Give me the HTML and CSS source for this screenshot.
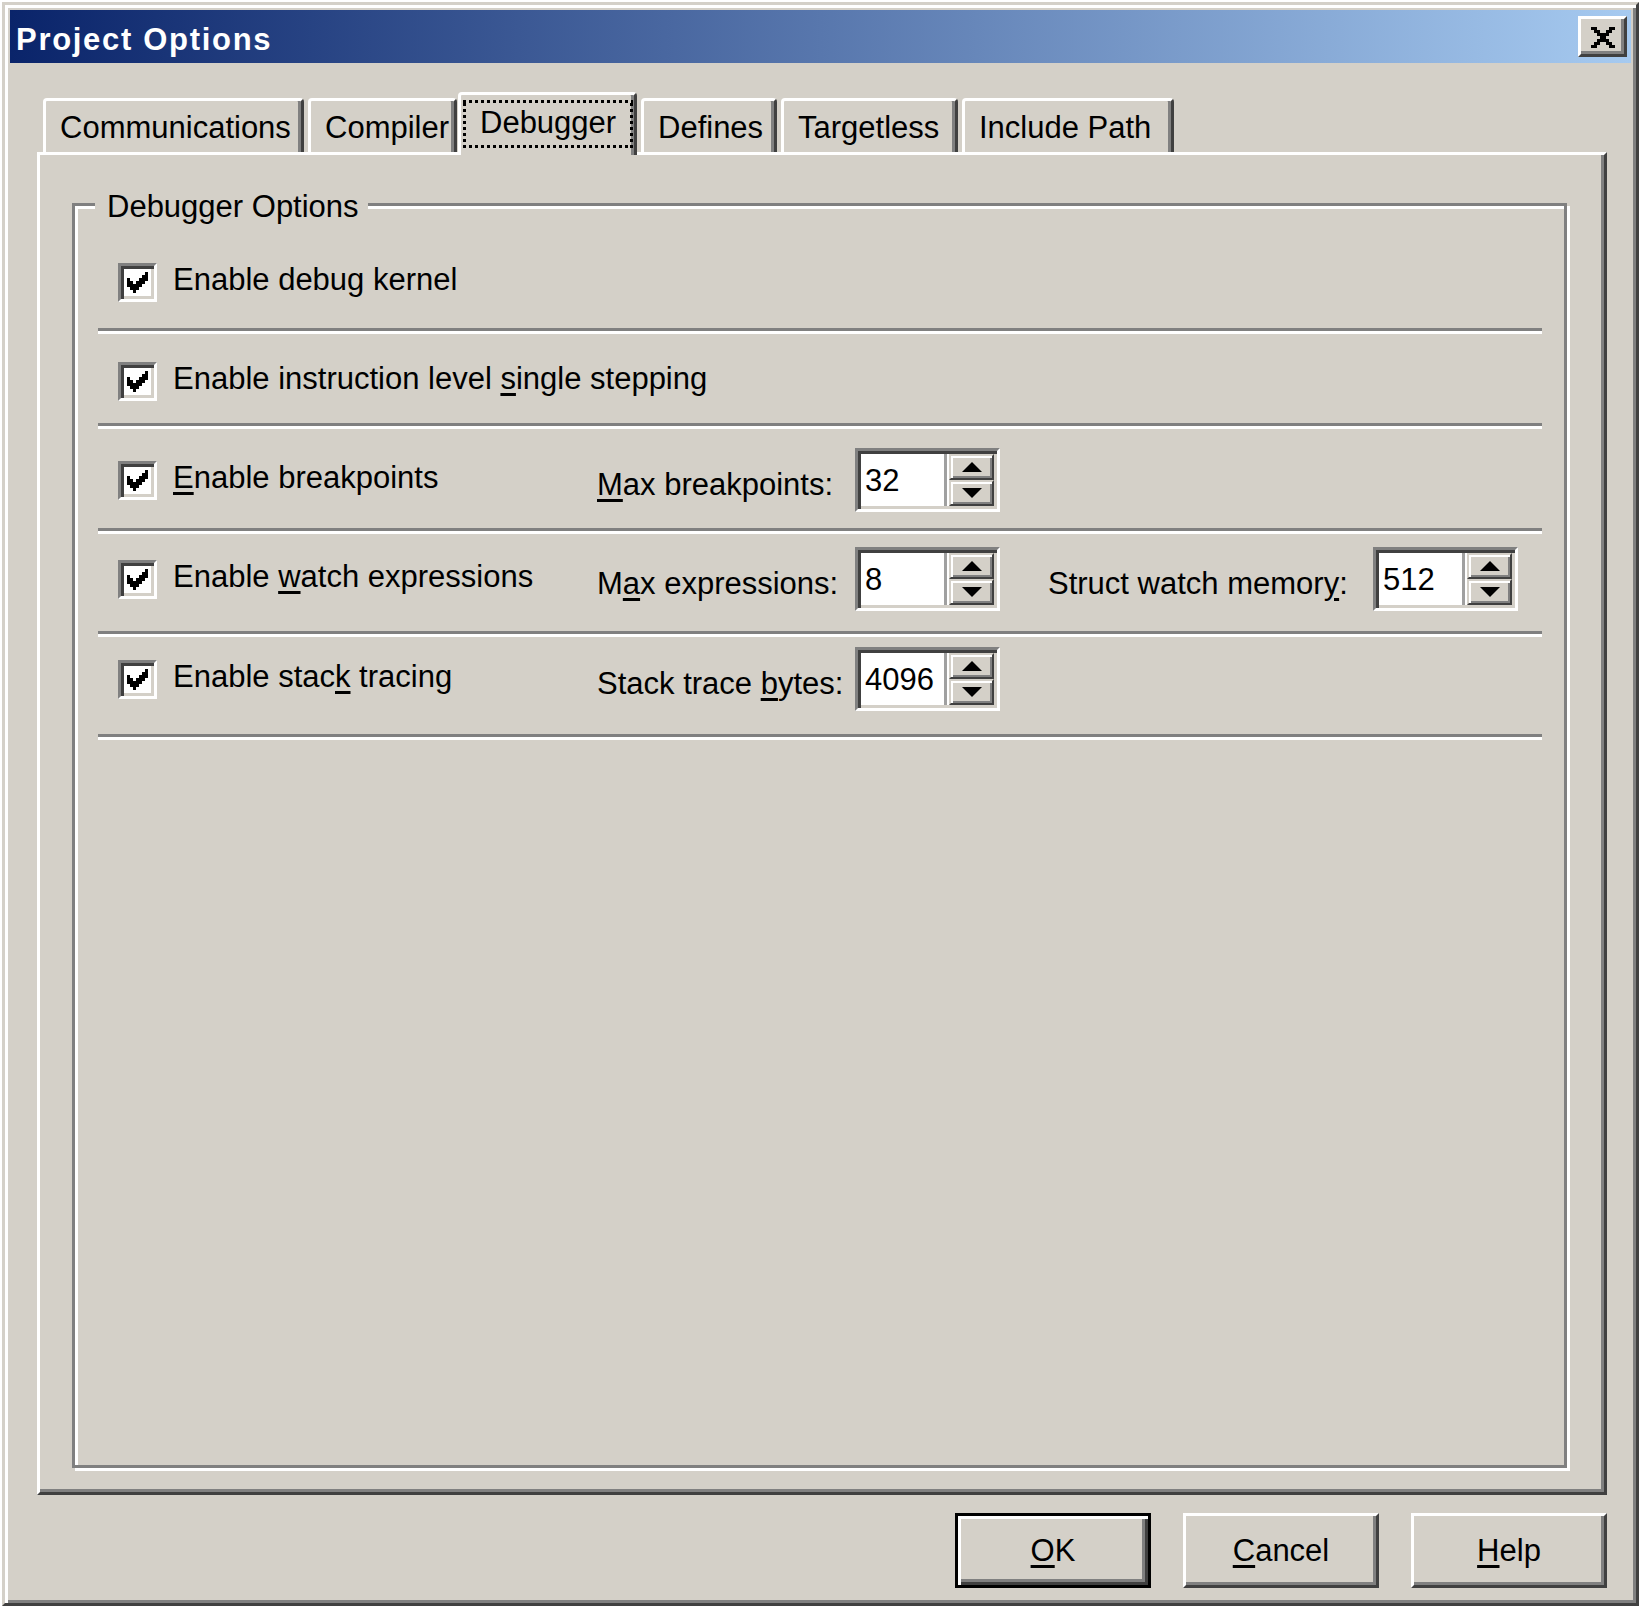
FILE: index.html
```html
<!DOCTYPE html>
<html lang="en">
<head>
    <meta charset="UTF-8">
    <title>Project Options</title>
    <link rel="stylesheet" href="styles.css">
</head>
<body>
    <div class="dialog">
        <div class="titlebar">
            <span class="title">Project Options</span>
            <button class="close-btn" type="button" aria-label="Close">
                <svg width="24" height="21" viewBox="0 0 24 21">
                    <path fill="#000" d="M0 0h6v3H0zM18 0h6v3h-6zM3 3h6v3H3zM15 3h6v3h-6zM6 6h12v3H6zM9 9h6v3H9zM6 12h12v3H6zM3 15h6v3H3zM15 15h6v3h-6zM0 18h6v3H0zM18 18h6v3h-6z"/>
                </svg>
            </button>
        </div>

        <div class="tabs">
            <div class="tab tab-comm">Communications</div>
            <div class="tab tab-compiler">Compiler</div>
            <div class="tab tab-debugger active"><span class="focus">Debugger</span></div>
            <div class="tab tab-defines">Defines</div>
            <div class="tab tab-targetless">Targetless</div>
            <div class="tab tab-include">Include Path</div>
        </div>

        <div class="panel">
            <div class="group">
                <span class="legend">Debugger Options</span>

                <div class="row r1">
                    <label class="opt"><span class="check"></span><span class="opt-text">Enable debug kernel</span></label>
                </div>
                <div class="sep s1"></div>

                <div class="row r2">
                    <label class="opt"><span class="check"></span><span class="opt-text">Enable instruction level <u>s</u>ingle stepping</span></label>
                </div>
                <div class="sep s2"></div>

                <div class="row r3">
                    <label class="opt"><span class="check"></span><span class="opt-text"><u>E</u>nable breakpoints</span></label>
                    <span class="field-label"><u>M</u>ax breakpoints:</span>
                    <div class="spin">
                        <span class="spin-value">32</span>
                        <span class="spin-btns"><span class="spin-up"></span><span class="spin-down"></span></span>
                    </div>
                </div>
                <div class="sep s3"></div>

                <div class="row r4">
                    <label class="opt"><span class="check"></span><span class="opt-text">Enable <u>w</u>atch expressions</span></label>
                    <span class="field-label">M<u>a</u>x expressions:</span>
                    <div class="spin">
                        <span class="spin-value">8</span>
                        <span class="spin-btns"><span class="spin-up"></span><span class="spin-down"></span></span>
                    </div>
                    <span class="field-label wide">Struct watch memor<u>y</u>:</span>
                    <div class="spin">
                        <span class="spin-value">512</span>
                        <span class="spin-btns"><span class="spin-up"></span><span class="spin-down"></span></span>
                    </div>
                </div>
                <div class="sep s4"></div>

                <div class="row r5">
                    <label class="opt"><span class="check"></span><span class="opt-text">Enable stac<u>k</u> tracing</span></label>
                    <span class="field-label">Stack trace <u>b</u>ytes:</span>
                    <div class="spin">
                        <span class="spin-value">4096</span>
                        <span class="spin-btns"><span class="spin-up"></span><span class="spin-down"></span></span>
                    </div>
                </div>
                <div class="sep s5"></div>
            </div>
        </div>

        <div class="buttons">
            <button class="btn default" type="button"><u>O</u>K</button>
            <button class="btn" type="button"><u>C</u>ancel</button>
            <button class="btn" type="button"><u>H</u>elp</button>
        </div>
    </div>
</body>
</html>
```

FILE: styles.css
```css
/* classic win2k look, everything drawn at 3x */
* {
    margin: 0;
    padding: 0;
    box-sizing: border-box;
}

body {
    background: #fff;
    font-family: "Liberation Sans", Arial, sans-serif;
    font-size: 31px;
    line-height: 31px;
    color: #000;
}

u {
    text-decoration-thickness: 3px;
    text-underline-offset: 4px;
}

.dialog {
    width: 1637px;
    margin: 2px 0 0 2px;
    background: #d4d0c8;
    border: 3px solid;
    border-color: #d4d0c8 #404040 #404040 #d4d0c8;
    box-shadow: inset 3px 3px #fff, inset -3px -3px #808080;
    padding: 5px 5px 15px 5px;
}

/* title bar */
.titlebar {
    height: 53px;
    display: flex;
    align-items: center;
    padding: 0 4px 0 6px;
    background: linear-gradient(90deg, #0a246a, #a6caf0);
}

.title {
    margin-top: 6px;
    color: #fff;
    font-weight: bold;
    letter-spacing: 1.7px;
}

.close-btn {
    margin-left: auto;
    width: 49px;
    height: 41px;
    display: flex;
    align-items: center;
    justify-content: center;
    padding-top: 1px;
    background: #d4d0c8;
    border: 3px solid;
    border-color: #fff #404040 #404040 #fff;
    box-shadow: inset -3px -3px #808080;
}

/* tabs */
.tabs {
    display: flex;
    align-items: flex-end;
    gap: 4px;
    height: 60px;
    margin: 29px 0 0 27px;
    padding-left: 6px;
}

.tab {
    height: 54px;
    padding: 11px 0 0 14px;
    white-space: nowrap;
    background: #d4d0c8;
    border: 3px solid;
    border-bottom: 0;
    border-color: #fff #404040 #404040 #fff;
    border-radius: 4px 4px 0 0;
    box-shadow: inset -3px 0 #808080;
}

.tab-comm { width: 261px; }
.tab-compiler { width: 149px; }
.tab-defines { width: 136px; }
.tab-targetless { width: 177px; }
.tab-include { width: 212px; }

.tab.active {
    position: relative;
    z-index: 1;
    width: 179px;
    height: 63px;
    margin: 0 0 -3px -3px;
    padding: 5px 1px 0 2px;
}

.focus {
    display: block;
    padding: 7px 0 10px 17px;
    background:
        repeating-linear-gradient(90deg, #000 0 3px, transparent 3px 6px) top / 100% 3px no-repeat,
        repeating-linear-gradient(90deg, #000 0 3px, transparent 3px 6px) bottom / 100% 3px no-repeat,
        repeating-linear-gradient(0deg, #000 0 3px, transparent 3px 6px) left / 3px 100% no-repeat,
        repeating-linear-gradient(0deg, #000 0 3px, transparent 3px 6px) right / 3px 100% no-repeat;
}

/* tab page */
.panel {
    display: flex;
    flex-direction: column;
    height: 1343px;
    margin: 0 24px 0 27px;
    border: 3px solid;
    border-color: #fff #404040 #404040 #fff;
    box-shadow: inset -3px -3px #808080;
}

.group {
    position: relative;
    flex: 1;
    margin: 48px 37px 24px 32px;
    padding: 44px 22px 0 23px;
    border: 3px solid #808080;
    box-shadow: inset 3px 3px #fff, 3px 3px #fff;
}

.legend {
    position: absolute;
    top: -15px;
    left: 20px;
    padding: 0 9px 0 12px;
    background: #d4d0c8;
}

.row {
    display: flex;
    align-items: center;
    height: 64px;
    padding-left: 20px;
}

.r2 { margin-top: 15px; }
.r3 { margin-top: 19px; }
.r4 { margin-top: 13px; }
.r5 { margin-top: 10px; }

.sep {
    height: 6px;
    border-top: 3px solid #808080;
    background: #fff;
}

.s1 { margin-top: 14px; }
.s2 { margin-top: 10px; }
.s3 { margin-top: 16px; }
.s4 { margin-top: 20px; }
.s5 { margin-top: 23px; }

.opt {
    display: flex;
    align-items: center;
    width: 479px;
    white-space: nowrap;
}

.opt-text {
    margin-bottom: 6px;
}

.check {
    flex: none;
    width: 39px;
    height: 39px;
    margin-right: 16px;
    background: #fff url("data:image/svg+xml,%3Csvg xmlns='http://www.w3.org/2000/svg' width='27' height='27'%3E%3Cpath d='M21 3h3v3h-3zM18 6h6v3h-6zM3 9h3v3H3zM15 9h9v3h-9zM3 12h6v3H3zM12 12h9v3h-9zM3 15h15v3H3zM6 18h9v3H6zM9 21h3v3H9z'/%3E%3C/svg%3E") 3px 3px no-repeat;
    border: 3px solid;
    border-color: #808080 #fff #fff #808080;
    box-shadow: inset 3px 3px #404040, inset -3px -3px #d4d0c8;
}

.field-label {
    width: 258px;
    margin-top: 8px;
    white-space: nowrap;
}

.field-label.wide {
    width: 325px;
    margin-left: 48px;
}

/* spin edit */
.spin {
    flex: none;
    display: flex;
    width: 145px;
    height: 64px;
    padding: 3px;
    background: #fff;
    border: 3px solid;
    border-color: #808080 #fff #fff #808080;
    box-shadow: inset 3px 3px #404040, inset -3px -3px #d4d0c8;
}

.spin-value {
    flex: 1;
    align-self: center;
    padding-left: 4px;
}

.spin-btns {
    display: flex;
    flex-direction: column;
    width: 50px;
    border-left: 3px solid #a0a0a0;
    padding-left: 2px;
    background: #fff;
}

.spin-up,
.spin-down {
    flex: 1;
    display: flex;
    align-items: center;
    justify-content: center;
    background: #d4d0c8;
    border: 2px solid;
    border-color: #d4d0c8 #404040 #404040 #d4d0c8;
    box-shadow: inset 2px 2px #fff, inset -2px -2px #808080;
}

.spin-up::after {
    content: "";
    border-left: 10px solid transparent;
    border-right: 10px solid transparent;
    border-bottom: 10px solid #000;
}

.spin-down::after {
    content: "";
    border-left: 10px solid transparent;
    border-right: 10px solid transparent;
    border-top: 10px solid #000;
}

/* dialog buttons */
.buttons {
    display: flex;
    justify-content: flex-end;
    gap: 32px;
    margin: 18px 24px 0 0;
}

.btn {
    width: 196px;
    height: 75px;
    font: inherit;
    color: #000;
    background: #d4d0c8;
    border: 3px solid;
    border-color: #fff #404040 #404040 #fff;
    box-shadow: inset -3px -3px #808080;
}

.btn.default {
    border-color: #000;
    box-shadow: inset 3px 3px #fff, inset -3px -3px #404040, inset -6px -6px #808080;
}
```
